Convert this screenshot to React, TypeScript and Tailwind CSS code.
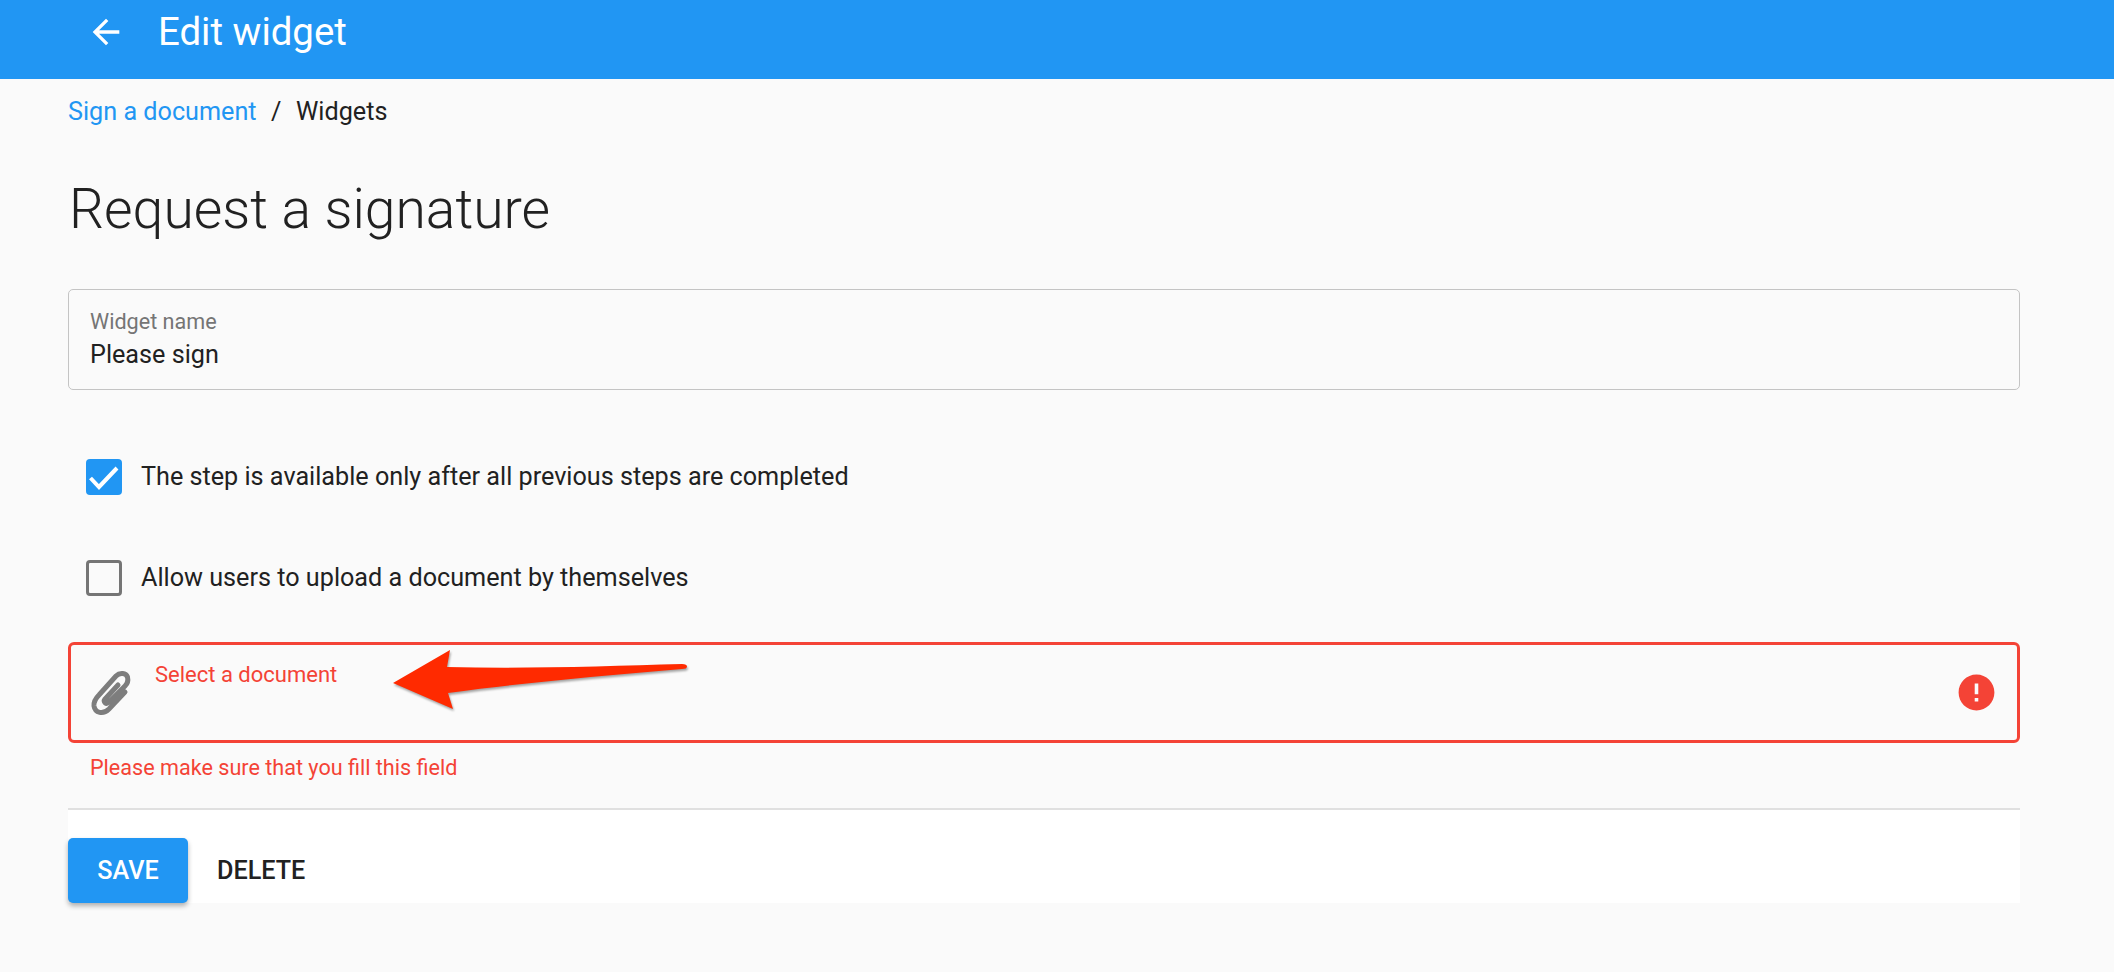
import React from "react";
import { MdArrowBack, MdError } from "react-icons/md";

const font = { fontFamily: '"Roboto", "Liberation Sans", sans-serif' };

function Row({ checked, label }: { checked?: boolean; label: string }) {
  return (
    <label className="flex items-center pl-[18px] gap-[19px] h-[36px]">
      {checked ? (
        <span className="flex h-[36px] w-[36px] items-center justify-center rounded-[4px] bg-[#2196f3]">
          <svg viewBox="0 0 36 36" className="h-[36px] w-[36px]" fill="none" stroke="#fff" strokeWidth="4">
            <path d="M4.5 19l8.5 9L31 9" />
          </svg>
        </span>
      ) : (
        <span className="h-[36px] w-[36px] rounded-[4px] border-[3px] border-[#757575]" />
      )}
      <span className="text-[25.2px] leading-[36px] text-[#212121]">{label}</span>
    </label>
  );
}

export default function App() {
  return (
    <div style={font} className="min-h-screen bg-[#fafafa]">
      <header className="flex h-[79px] items-center bg-[#2196f3] pb-[15px] pl-[86px] text-white">
        <MdArrowBack size={40} />
        <h1 className="ml-[32px] text-[38.4px] leading-none">Edit widget</h1>
      </header>
      <main className="pl-[68px] pr-[94px]">
        <nav className="flex items-center pt-[19px] text-[25.2px] leading-[28px]">
          <span className="text-[#2196f3]">Sign a document</span>
          <span className="mx-[14.5px] text-[#212121]">/</span>
          <span className="text-[#212121]">Widgets</span>
        </nav>
        <h2 className="mt-[51px] pl-[1px] text-[55.2px] font-light leading-[64px] text-[#212121]">Request a signature</h2>
        <div className="mt-[48px] flex h-[101px] flex-col rounded-[5px] border border-[#c4c4c4] pl-[21px] pt-[20px]">
          <span className="text-[21.6px] leading-[24px] text-[#757575]">Widget name</span>
          <span className="mt-[5px] text-[25.2px] leading-[32px] text-[#212121]">Please sign</span>
        </div>
        <div className="mt-[69px] flex flex-col gap-[65px]">
          <Row checked label="The step is available only after all previous steps are completed" />
          <Row label="Allow users to upload a document by themselves" />
        </div>
        <div className="relative mt-[46px] flex h-[101px] items-center justify-between rounded-[6px] border-[3px] border-[#f44336] pl-[14px] pr-[19px]">
          <div className="flex h-full items-start">
            <svg viewBox="0 0 48 54" className="mt-[21px] h-[54px] w-[48px]" fill="none" stroke="#7d7d7d" strokeWidth="5" strokeLinecap="round">
              <path d="M40 26L24 43C18 49 10 47 9 40C8.500 35 11 32 14 29L31 10C35 6 41 7 42.500 11C43.500 15 42 18 40 20L24 36C21 39 18 36 20 33L33 19" />
            </svg>
            <span className="ml-[22px] mt-[18px] text-[22px] leading-[24px] text-[#f44336]">Select a document</span>
          </div>
          <MdError size={43} className="text-[#f44336]" />
          <svg className="absolute left-[322px] top-[3px] h-[64px] w-[300px]" viewBox="393 648 300 64" fill="#ff2a00" style={{ filter: "drop-shadow(1px 2px 1px rgba(0,0,0,.35))" }}>
            <path d="M393 683L450 650L447 667C530 669 610 666 682 664Q687 664 687 666.5Q687 669 682 669C600 676 520 683 448 693L453 709Z" />
          </svg>
        </div>
        <p className="mt-[13px] pl-[22px] text-[21.6px] leading-[24px] text-[#f44336]">Please make sure that you fill this field</p>
        <div className="mt-[28px] flex h-[95px] items-end border-t-[2px] border-[#e0e0e0] bg-white">
          <button className="h-[65px] w-[120px] rounded-[5px] bg-[#2196f3] text-[25.2px] font-medium text-white shadow-[0_3px_5px_rgba(0,0,0,0.3)]">SAVE</button>
          <button className="ml-[29px] h-[65px] text-[25.2px] font-medium text-[#212121]">DELETE</button>
        </div>
      </main>
    </div>
  );
}
